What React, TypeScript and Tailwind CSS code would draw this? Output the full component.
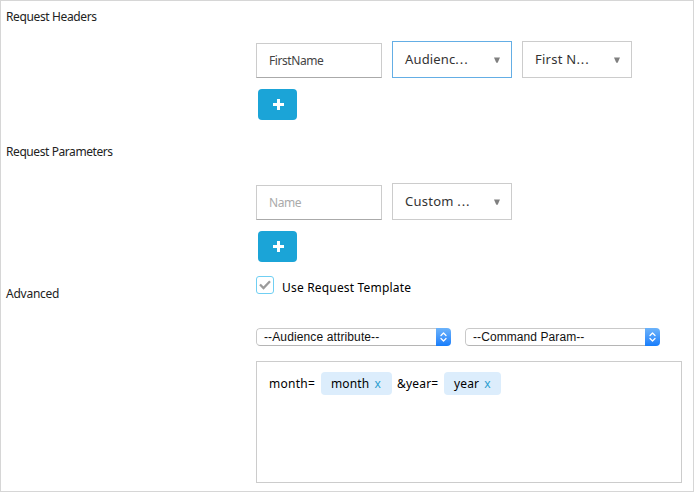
import React from "react";

const FONT = "font-['Noto_Sans','Open_Sans',sans-serif]";

function Label({ text, className }: { text: string; className: string }) {
  return (
    <div className={`w-[255px] shrink-0 pl-[5px] text-[12px] leading-4 text-[#222] whitespace-nowrap ${className}`}>
      {text}
    </div>
  );
}

function Dropdown({ text, className }: { text: string; className: string }) {
  return (
    <button type="button" className={`flex h-[37px] items-center justify-between border bg-white pl-3 pr-[11px] text-[13px] text-[#333] whitespace-nowrap ${className}`}>
      <span>
        {text}
        <span className="tracking-[0.9px]">...</span>
      </span>
      <svg width="6" height="6" viewBox="0 0 6 6" className="mt-px">
        <path d="M0 0.5H6L3.7 5.7H2.3Z" fill="#808080" />
      </svg>
    </button>
  );
}

function AddButton() {
  return (
    <button type="button" className="ml-[2px] mt-[11px] flex h-[31px] w-[39px] items-center justify-center rounded-[4px] bg-[#1ba4d7]">
      <svg width="11" height="11" viewBox="0 0 11 11" className="ml-[2px]">
        <path d="M4 0H7V4H11V7H7V11H4V7H0V4H4Z" fill="#fff" />
      </svg>
    </button>
  );
}

function NativeSelect({ text, textClass }: { text: string; textClass: string }) {
  return (
    <div className="flex h-[18px] w-[195px] overflow-hidden rounded-[4px] bg-white font-['Liberation_Sans',Arial,sans-serif] text-[12px] leading-[17px] text-[#111]">
      <div className="flex-1 rounded-l-[4px] border border-r-0 border-[#c9c9c9] border-b-[#b5b5b5] pl-[7px]">
        <span className={`block whitespace-nowrap leading-[17px] ${textClass}`}>{text}</span>
      </div>
      <div className="flex w-[15px] items-center justify-center bg-gradient-to-b from-[#6cb3fa] to-[#147dfb]">
        <svg width="7" height="10" viewBox="0 0 7 10" fill="none" stroke="#fff" strokeWidth="1.3" strokeLinecap="round" strokeLinejoin="round">
          <path d="M1 3.5L3.5 1L6 3.5M1 6.5L3.5 9L6 6.5" />
        </svg>
      </div>
    </div>
  );
}

function Tag({ text, className }: { text: string; className: string }) {
  return (
    <span className={`flex h-[23px] items-center rounded-[4px] bg-[#dcedfc] pl-[10px] leading-[23px] ${className}`}>
      {text}
      <span className="ml-[5px] text-[#2c9fd0]">x</span>
    </span>
  );
}

export default function App() {
  return (
    <div className={`h-[492px] w-[694px] overflow-hidden border border-[#d6d6d6] bg-white ${FONT}`}>
      <section className="flex h-[135px]">
        <Label text="Request Headers" className="pt-[8px] tracking-[-0.37px]" />
        <div className="pt-[40px]">
          <div className="flex items-end gap-[10px]">
            <input readOnly value="FirstName" className="h-[35px] w-[126px] border border-[#ccc] border-b-[#aaa] px-3 text-[12px] tracking-[-0.42px] text-[#444] outline-none" />
            <Dropdown text="Audienc" className="w-[120px] border-[#64aee5] tracking-[0.15px]" />
            <Dropdown text="First N" className="w-[110px] border-[#ccc] tracking-[0.25px]" />
          </div>
          <AddButton />
        </div>
      </section>
      <section className="flex h-[135px]">
        <Label text="Request Parameters" className="pt-[8px] tracking-[-0.42px]" />
        <div className="pt-[47px]">
          <div className="flex items-end gap-[10px]">
            <input placeholder="Name" className="h-[35px] w-[126px] border border-[#ccc] border-b-[#aaa] px-3 text-[12px] tracking-[-0.42px] outline-none placeholder:text-[#aaa]" />
            <Dropdown text="Custom " className="w-[120px] border-[#ccc] tracking-[0.25px]" />
          </div>
          <AddButton />
        </div>
      </section>
      <section className="flex">
        <Label text="Advanced" className="pt-[15px] tracking-[-0.25px]" />
        <div className="pt-[5px]">
          <div className="flex h-[18px]">
            <span className="flex size-[18px] items-center justify-center rounded-[3px] border border-[#70cff3]">
              <svg width="12" height="10" viewBox="0 0 12 10" fill="none" stroke="#9b9b9b" strokeWidth="2.3">
                <path d="M1 4.5L4.5 8L11 1.3" />
              </svg>
            </span>
            <span className="ml-2 mt-[4px] text-[12px] leading-4 tracking-[0.18px] text-black whitespace-nowrap">Use Request Template</span>
          </div>
          <div className="mt-[34px] flex gap-[14px]">
            <NativeSelect text="--Audience attribute--" textClass="tracking-[0.12px]" />
            <NativeSelect text="--Command Param--" textClass="tracking-[0.08px]" />
          </div>
          <div className="mt-[15px] h-[122px] w-[426px] border border-[#ccc] pl-3 pt-[10px] text-[12px] text-black">
            <div className="flex h-[23px] items-center whitespace-nowrap">
              <span className="w-[52px] tracking-[0.25px]">month=</span>
              <Tag text="month" className="w-[71px] tracking-[0.15px]" />
              <span className="ml-[5px] w-[47px] tracking-[0.2px]">&amp;year=</span>
              <Tag text="year" className="w-[57px] tracking-[0.15px]" />
            </div>
          </div>
        </div>
      </section>
    </div>
  );
}
